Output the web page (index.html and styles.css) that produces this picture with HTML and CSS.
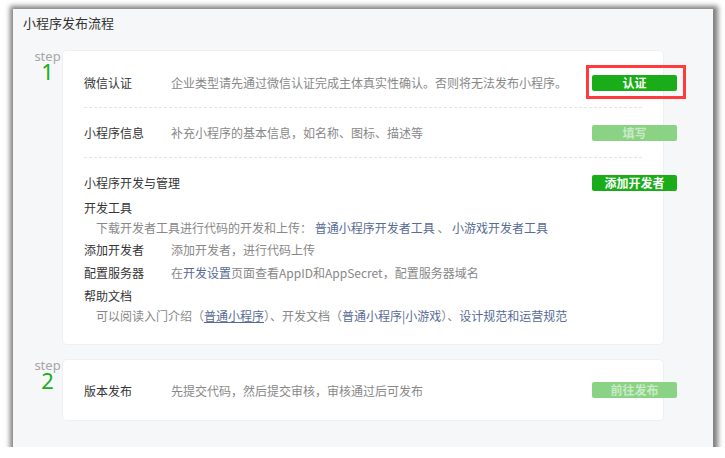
FILE: index.html
```html
<!DOCTYPE html>
<html lang="zh-CN">
<head>
    <meta charset="UTF-8">
    <title>小程序发布流程</title>
    <link rel="stylesheet" href="styles.css">
</head>
<body>

<div class="panel">
    <div class="panel-title">小程序发布流程</div>

    <div class="step">
        <div class="step-no">
            <span class="step-word">step</span>
            <span class="step-num">1</span>
        </div>
        <div class="card">
            <div class="row dashed">
                <span class="label">微信认证</span>
                <span class="desc">企业类型请先通过微信认证完成主体真实性确认。否则将无法发布小程序。</span>
                <span class="btn-wrap">
                    <button class="btn">认证</button>
                    <span class="mark"></span>
                </span>
            </div>
            <div class="row dashed">
                <span class="label">小程序信息</span>
                <span class="desc">补充小程序的基本信息，如名称、图标、描述等</span>
                <button class="btn btn-light">填写</button>
            </div>
            <div class="dev">
                <div class="dev-head">
                    <span class="dev-title">小程序开发与管理</span>
                    <button class="btn">添加开发者</button>
                </div>
                <div class="item">开发工具</div>
                <div class="sub">下载开发者工具进行代码的开发和上传： <a>普通小程序开发者工具</a> 、 <a>小游戏开发者工具</a></div>
                <div class="item">
                    <span class="label">添加开发者</span>
                    <span class="desc">添加开发者，进行代码上传</span>
                </div>
                <div class="item">
                    <span class="label">配置服务器</span>
                    <span class="desc">在<a>开发设置</a>页面查看AppID和AppSecret，配置服务器域名</span>
                </div>
                <div class="item">帮助文档</div>
                <div class="sub">可以阅读入门介绍（<a class="under">普通小程序</a>）、开发文档（<a>普通小程序|小游戏</a>）、<a>设计规范和运营规范</a></div>
            </div>
        </div>
    </div>

    <div class="step step-last">
        <div class="step-no">
            <span class="step-word">step</span>
            <span class="step-num">2</span>
        </div>
        <div class="card">
            <div class="row single">
                <span class="label">版本发布</span>
                <span class="desc">先提交代码，然后提交审核，审核通过后可发布</span>
                <button class="btn btn-light">前往发布</button>
            </div>
        </div>
    </div>
</div>

</body>
</html>
```

FILE: styles.css
```css
body {
    margin: 0;
    background-color: #ffffff;
    font-family: "Noto Sans CJK SC", "Noto Sans", sans-serif;
    font-size: 12px;
    color: #353535;
}
.panel {
    width: 700px;
    height: 438px;
    margin: 9px 0 0 13px;
    background-color: #f6f7f9;
    box-shadow: 1px 1px 5px 4px rgba(0, 0, 0, 0.5);
    box-sizing: border-box;
}
.panel-title {
    padding: 5px 0 0 10px;
    font-size: 13px;
    line-height: 17px;
    color: #333;
}
.step {
    display: flex;
    align-items: flex-start;
    margin-top: 20px;
}
.step-last {
    margin-top: 16px;
}
.step-no {
    width: 23px;
    margin-left: 23px;
    padding-right: 4px;
    display: flex;
    flex-direction: column;
    align-items: center;
}
.step-word {
    font-family: "Noto Sans", sans-serif;
    font-size: 13px;
    line-height: 11px;
    color: #a6a6a6;
}
.step-num {
    font-family: "Noto Sans", sans-serif;
    font-size: 22px;
    line-height: 17px;
    color: #1aad19;
    margin-top: 1px;
}
.card {
    width: 600px;
    background-color: #ffffff;
    border-radius: 4px;
    box-shadow: 0 0 0 1px #eef0f3;
    padding: 7px 21px 0;
    box-sizing: border-box;
}
.row {
    display: flex;
    align-items: center;
    padding: 16px 0;
    line-height: 17px;
}
.dashed {
    border-bottom: 1px dashed #e4e4e4;
}
.single {
    height: 60px;
    padding: 0;
    margin-top: -7px;
}
.label {
    width: 87px;
    flex-shrink: 0;
    color: #353535;
}
.desc {
    flex: 1;
    color: #888;
    white-space: nowrap;
}
a {
    color: #576b95;
    cursor: pointer;
}
a.under {
    text-decoration: underline;
}
.btn-wrap {
    position: relative;
    display: flex;
}
.btn {
    width: 85px;
    height: 16px;
    padding: 0;
    margin-right: -35px;
    margin-left: auto;
    border: none;
    border-radius: 2px;
    background-color: #1aad19;
    color: #ffffff;
    font-family: "Noto Sans CJK SC", sans-serif;
    font-size: 12px;
    font-weight: bold;
    line-height: 16px;
    cursor: pointer;
}
.btn-light {
    background-color: #8ad384;
    color: rgba(255, 255, 255, 0.55);
}
.mark {
    position: absolute;
    left: -6px;
    top: -10px;
    width: 94px;
    height: 28px;
    border: 3px solid #ff3b3b;
}
.dev {
    padding: 16px 0 19px;
}
.dev-head {
    display: flex;
    align-items: center;
    line-height: 17px;
}
.dev-title {
    flex: 1;
    white-space: nowrap;
}
.item {
    display: flex;
    margin-top: 3px;
    line-height: 20px;
}
.dev-head + .item {
    margin-top: 7px;
}
.sub {
    padding-left: 12px;
    line-height: 19px;
    color: #888;
    white-space: nowrap;
}
```
